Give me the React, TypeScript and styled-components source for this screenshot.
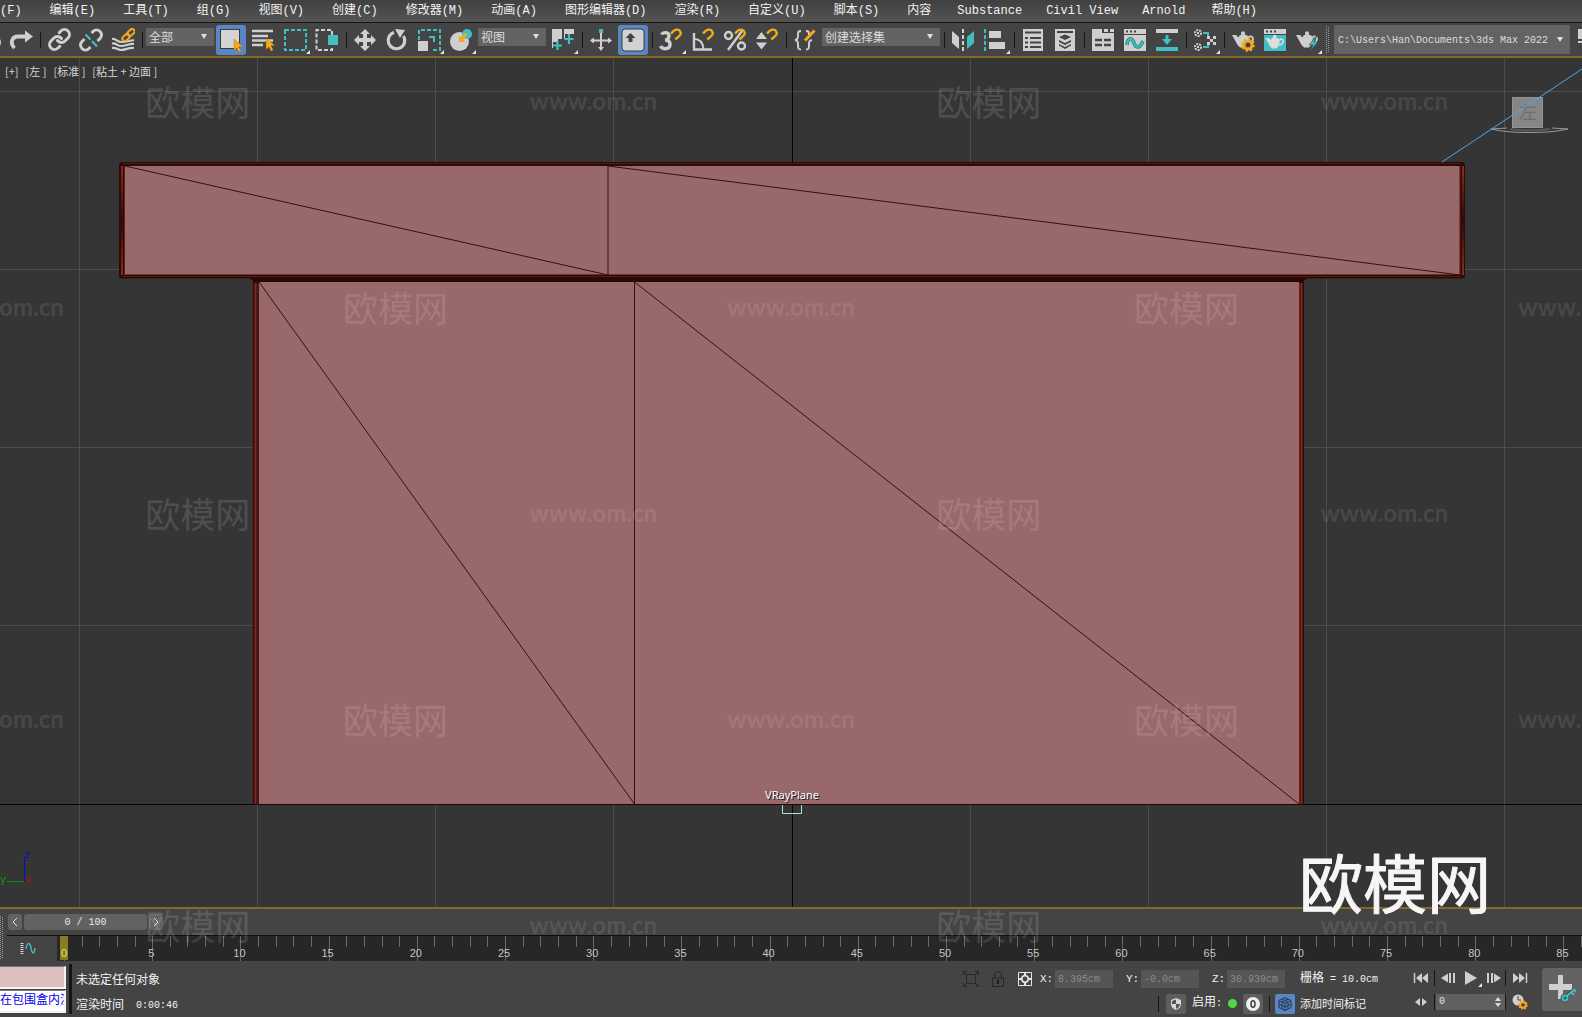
import React from 'react';
import styled, { createGlobalStyle, css } from 'styled-components';

const cjk = `'Noto Sans CJK SC', sans-serif`;
const mono = `'Liberation Mono', 'Noto Sans CJK SC', monospace`;

const c = {
  bar: '#444444',
  view: '#353535',
  gold: '#846a28',
  icon: '#cfcfcf',
  teal: '#41bfc0',
  orange: '#f6a81c',
  active: '#5b86c4',
};

const Global = createGlobalStyle`
  * { box-sizing: border-box; }
  html, body { margin: 0; background: ${c.bar}; }
  body { overflow: hidden; }
  button, input, select { font: inherit; color: inherit; margin: 0; padding: 0; border: 0; border-radius: 0; background: none; outline: 0; }
`;

const Shell = styled.div`
  position: relative;
  display: flex;
  flex-direction: column;
  height: 100vh;
  overflow: hidden;
  background: ${c.bar};
  color: #f2f2f2;
  font-family: ${mono};
  font-size: 12px;
  line-height: 16px;
`;

/* ---------- menu ---------- */

const MenuBar = styled.nav`
  display: flex;
  height: 23px;
  flex: none;
  margin-left: -38px;
  border-bottom: 1px solid #161616;
  background: linear-gradient(#404040, #545454);
`;

const MenuButton = styled.button<{ $latin?: boolean }>`
  flex: none;
  padding: 0 ${(p) => (p.$latin ? 12 : 14)}px 1px;
  line-height: 16px;
  white-space: pre;
`;

/* ---------- toolbar ---------- */

const Toolbar = styled.div`
  display: flex;
  align-items: center;
  flex: none;
  height: 33px;
  margin-left: -27px;
  background: ${c.bar};
`;

const Tool = styled.button<{ $active?: boolean; $flyout?: boolean }>`
  position: relative;
  display: flex;
  align-items: center;
  justify-content: center;
  flex: none;
  width: 30px;
  height: 30px;
  margin: 0 1px;
  border-radius: 3px;
  ${(p) => p.$active && css`background: ${c.active};`}
  ${(p) =>
    p.$flyout &&
    css`
      &::after {
        content: '';
        position: absolute;
        right: 0;
        bottom: 1px;
        border-left: 4px solid transparent;
        border-bottom: 4px solid #e4e4e4;
      }
    `}
`;

const Sep = styled.span`
  flex: none;
  width: 1px;
  height: 16px;
  margin: 0 2px 0 3px;
  background: #151515;
`;

const Drop = styled.div<{ $w?: number; $tall?: boolean }>`
  position: relative;
  ${(p) => (p.$w ? css`flex: none; width: ${p.$w}px;` : css`flex: 1;`)}
  height: ${(p) => (p.$tall ? 29 : 18)}px;
  margin: 0 1px ${(p) => (p.$tall ? 0 : 6)}px;
  background: #636363;
  &::after {
    content: '';
    position: absolute;
    right: 7px;
    top: calc(50% - 3px);
    border: 3px solid transparent;
    border-top: 5px solid #dedede;
    border-bottom: 0;
    pointer-events: none;
  }
  select {
    appearance: none;
    display: block;
    width: 100%;
    height: 100%;
    padding-left: ${(p) => (p.$tall ? 4 : 3)}px;
    padding-top: ${(p) => (p.$tall ? 2 : 0)}px;
    color: #dcdcdc;
    font-family: ${(p) => (p.$tall ? mono : cjk)};
    font-size: ${(p) => (p.$tall ? 10 : 12)}px;
    line-height: 16px;
  }
`;

const ToolGrip = styled.span`
  display: flex;
  justify-content: center;
  flex: none;
  width: 10px;
`;

const CutTool = styled.span`
  flex: none;
  width: 11px;
  height: 30px;
  overflow: hidden;
`;

const Svg = ({ s = 24, w, children }: { s?: number; w?: number; children: React.ReactNode }) => (
  <svg width={w ?? s} height={s} viewBox={`0 0 ${w ?? s} ${s}`} fill="none" aria-hidden="true">
    {children}
  </svg>
);

const Dots = ({ h }: { h: number }) => (
  <Svg s={h} w={4}>
    <path d={`M.5 0V${h}M2.5 1V${h}`} stroke="#9a9a9a" strokeDasharray="1 1" />
  </Svg>
);

const Hook = () => (
  <path d="M12 5.5l3-2.8c2-1.7 4.8-1.2 6 .4 1.2 1.8.6 3.6-.7 4.8L16.3 11.5" stroke={c.orange} strokeWidth="2.4" />
);
const Pot = ({ fill = c.icon }: { fill?: string }) => (
  <g>
    <path d="M1 7h4l2.5 2.5C8 8 9 7 10.5 6.6a2 2 0 1 1 3 0C16 7 17.5 8.5 18 10c0 4-2 8-4 9.5H9C7.5 18 6 16.5 5 14z" fill={fill} />
    <path d="M17.5 9.5c2-2 4.5-1 4.5 1.2 0 2.4-2.5 4.3-5 5" stroke={fill} strokeWidth="1.8" />
  </g>
);
const Cursor = ({ x, y }: { x: number; y: number }) => (
  <path transform={`translate(${x} ${y})`} d="M0 0l9 7.5-4 .3 2.3 4.2L5 13.2 2.8 9 0 11.5z" fill={c.orange} stroke="#7a5414" strokeWidth=".3" />
);

const icons: Record<string, React.ReactNode> = {
  undo: <path d="M20 19c4-4 2-10-4-10H6" stroke={c.icon} strokeWidth="3.6" />,
  redo: (
    <>
      <path d="M5.5 20C.5 15 3 8.5 9 8.5h8" stroke={c.icon} strokeWidth="3.8" />
      <path d="M16 2.5l8 6-8 6z" fill={c.icon} />
    </>
  ),
  link: (
    <g stroke={c.icon} strokeWidth="3" strokeLinecap="round" transform="translate(.5 -.5)">
      <path d="M10 13a5 5 0 0 0 7.54.54l3-3a5 5 0 0 0-7.07-7.07l-1.72 1.71" />
      <path d="M14 11a5 5 0 0 0-7.54-.54l-3 3a5 5 0 0 0 7.07 7.07l1.71-1.71" />
    </g>
  ),
  unlink: (
    <>
      <path d="M12.5 5L14 3.5a4.8 4.8 0 0 1 7 7L18.5 13M11.5 19L10 20.5a4.8 4.8 0 0 1-7-7L5.5 11" stroke={c.icon} strokeWidth="3" />
      <path d="M6.5 6.5l5 5M13 13l5 5.5" stroke={c.teal} strokeWidth="2.2" />
    </>
  ),
  bind: (
    <>
      <path
        d="M1 11c4-1 5 3 9 3 4 0 8-1 13-2M1 15.5c4-1 5 2.5 9 2.5 5 0 8-2.5 13-2M1 20c4-1 5 2 9 2 5 0 8-3 13-2"
        stroke={c.icon}
        strokeWidth="2.2"
      />
      <g stroke={c.orange} strokeWidth="2">
        <rect x="16" y="2" width="8" height="5" rx="2.5" transform="rotate(-42 20 4.5)" />
        <rect x="11" y="7" width="8" height="5" rx="2.5" transform="rotate(-42 15 9.5)" />
      </g>
    </>
  ),
  select: (
    <>
      <rect x="1.5" y="1.5" width="19" height="19" fill="#d4d4d4" stroke="#3c3c3c" />
      <Cursor x={15} y={11} />
    </>
  ),
  byName: (
    <>
      <path d="M1 3h21M1 8h16M1 12.5h21M1 17h11" stroke={c.icon} strokeWidth="2.4" />
      <Cursor x={15} y={10} />
    </>
  ),
  region: <rect x="2" y="2" width="21" height="20" stroke={c.teal} strokeWidth="2" strokeDasharray="4 2" />,
  crossing: (
    <>
      <path d="M17 7V2H1.5v20H17v-3" stroke={c.icon} strokeWidth="2" strokeDasharray="4 2" />
      <rect x="13" y="7" width="10" height="10" fill={c.teal} />
    </>
  ),
  move: <path d="M12 1l5 5h-3v4h4V7l5 5-5 5v-3h-4v4h3l-5 5-5-5h3v-4H6v3l-5-5 5-5v3h4V6H7z" fill={c.icon} />,
  rotate: (
    <>
      <path d="M9 4.5a8.3 8.3 0 1 0 9.5 3.5" stroke={c.icon} strokeWidth="3.2" />
      <path d="M10 1l10 1-5 8z" fill={c.icon} />
    </>
  ),
  scale: (
    <>
      <path d="M2 12V2h21v20h-9" stroke={c.teal} strokeWidth="2" strokeDasharray="4 2" />
      <rect x="1" y="13" width="10" height="10" fill={c.icon} />
      <path d="M12 9h5v5" stroke={c.teal} strokeWidth="2" />
    </>
  ),
  place: (
    <>
      <circle cx="10.5" cy="13.5" r="9.5" fill={c.icon} />
      <circle cx="18" cy="6" r="5" fill={c.teal} />
      <path d="M17.5 6L12 11.5" stroke={c.orange} strokeWidth="3" />
      <path d="M10 7.5V14h6.5z" fill={c.orange} />
    </>
  ),
  pivot: (
    <>
      <path d="M1 1h10v10H7v4H4v5H1zM13 1h10v10h-3V6h-4v5h-3z" fill={c.icon} />
      <path d="M2 14h9v9H2zM14 6h9v10h-9z" fill={c.bar} />
      <path d="M6.5 13v9M2 17.5h9M18 6v10M13.5 11h9" stroke={c.teal} strokeWidth="2.2" />
    </>
  ),
  manipulate: (
    <>
      <path d="M12 5v17M2 12.5h20" stroke={c.icon} strokeWidth="2" />
      <path d="M5 9.5v6l-4-3zM19 9.5v6l4-3zM9 19h6l-3 4z" fill={c.icon} />
      <rect x="10" y="1" width="4" height="4" fill={c.teal} />
    </>
  ),
  keyboard: (
    <>
      <rect x="1" y="1" width="22" height="22" rx="3" fill="#d2d2d2" stroke="#3c3c3c" />
      <path d="M9.5 5l5 5h-3v4h-4v-4h-3z" fill="#444" />
    </>
  ),
  snap3: (
    <>
      <path d="M2.5 6.5C4 3.8 10 3.8 10 8c0 2.5-2 4-4 4 3 0 5 1 5 4.5 0 5-7.5 5.5-9.500 1.500" stroke={c.icon} strokeWidth="3.4" />
      <Hook />
    </>
  ),
  angle: (
    <>
      <path d="M3 5v16.5h18" stroke={c.icon} strokeWidth="2.4" />
      <path d="M3 11c6 0 9 4 9.5 10" stroke={c.icon} strokeWidth="2" />
      <Hook />
    </>
  ),
  percent: (
    <>
      <path d="M19 3L5 22" stroke={c.icon} strokeWidth="2.4" />
      <circle cx="5.5" cy="7.5" r="3.5" stroke={c.icon} strokeWidth="2.4" />
      <circle cx="18.5" cy="18" r="3.5" stroke={c.icon} strokeWidth="2.4" />
      <Hook />
    </>
  ),
  spinner: (
    <>
      <path d="M6.5 4l5.5 7H1zM1 14.5h11l-5.5 7z" fill={c.icon} />
      <Hook />
    </>
  ),
  selSet: (
    <>
      <path d="M8 3C5 3 5 4 5 7s0 4.5-3 5c3 .5 3 2 3 5s0 4.5 3 4.5M13 3c3 0 3 1 3 4M13 21.5c3 0 3-1.5 3-4.5s0-4.5 3-5" stroke={c.icon} strokeWidth="2" />
      <path d="M12 12.5L21.5 2.5" stroke={c.orange} strokeWidth="3" />
    </>
  ),
  mirror: (
    <>
      <path d="M1 3l7 6v12l-7-6z" fill={c.icon} />
      <path d="M23 3l-7 6v12l7-6z" fill={c.teal} />
      <path d="M12 1v22" stroke={c.icon} strokeWidth="2" strokeDasharray="4 2" />
    </>
  ),
  align: (
    <>
      <path d="M2 1v22" stroke={c.teal} strokeWidth="2" strokeDasharray="4 2" />
      <path d="M6 3h12v7H6zM6 14h16v7H6z" fill={c.icon} />
    </>
  ),
  layerList: (
    <>
      <rect x="2" y="1" width="20" height="22" fill={c.icon} />
      <path d="M4 4.5h16M4 10h3M9 10h11M4 14.5h3M9 14.5h11M4 19h3M9 19h11" stroke="#444" strokeWidth="2" />
    </>
  ),
  layers: (
    <>
      <rect x="2" y="1" width="20" height="22" fill={c.icon} />
      <path d="M4 4h16" stroke="#444" strokeWidth="2" />
      <path d="M6 9l6-2.5L18 9l-6 3zM6 12l6 3 6-3v2l-6 3-6-3zM6 16l6 3 6-3v1.5L12 21l-6-3.5z" fill="#444" />
    </>
  ),
  ribbon: (
    <>
      <path d="M1 1h10v4h12v18H1zM13 1h4v3h-4zM19 1h4v3h-4z" fill={c.icon} />
      <path d="M4 12h7M13 12h7M4 17h7M13 17h7" stroke="#444" strokeWidth="2.4" />
    </>
  ),
  curve: (
    <>
      <path d="M1 1h22v5H1zM1 7h22v16H1z" fill={c.icon} />
      <path d="M3 3.5h2M7 3.5h2M11 3.5h2" stroke="#444" strokeWidth="2" />
      <path d="M4 17c1-8 5-8 7-2s6 5 9-2" stroke="#1d7d80" strokeWidth="3.6" />
      <path d="M4 17c1-8 5-8 7-2s6 5 9-2" stroke={c.teal} strokeWidth="2" />
    </>
  ),
  schematic: (
    <>
      <path d="M1 1h22v4H1z" fill={c.icon} />
      <path d="M1 19h22v4H1z" fill={c.teal} />
      <path d="M12 7v5" stroke={c.teal} strokeWidth="3" />
      <path d="M7 11h10l-5 6z" fill={c.teal} />
    </>
  ),
  material: (
    <>
      <path d="M10 5h5v4M10 19h5v-4" stroke={c.teal} strokeWidth="2" />
      <g stroke={c.icon} strokeWidth="2" strokeDasharray="2 1">
        <circle cx="5" cy="5" r="3" />
        <circle cx="5" cy="19" r="3" />
      </g>
      <path d="M14 8h3v3h-3zM20 8h3v3h-3zM17 11h3v3h-3zM14 14h3v3h-3zM20 14h3v3h-3zM4 4h2v2H4zM4 18h2v2H4z" fill={c.icon} />
    </>
  ),
  renderSetup: (
    <>
      <Pot />
      <circle cx="17" cy="17" r="4" stroke={c.orange} strokeWidth="3" fill={c.bar} />
      <circle cx="17" cy="17" r="5.8" stroke={c.orange} strokeWidth="2" strokeDasharray="2.3 2.2" />
    </>
  ),
  frame: (
    <>
      <path d="M1 1h22v5H1z" fill={c.icon} />
      <path d="M3 3.5h2M7 3.5h2M11 3.5h2" stroke="#444" strokeWidth="2" />
      <path d="M1 7h22v16H1z" fill={c.teal} />
      <g transform="translate(1.5 4) scale(.85)">
        <Pot fill="#dedede" />
      </g>
    </>
  ),
  render: (
    <>
      <Pot />
      <path d="M21 8l-7 9h4l-3 6 8-9h-4l3-6z" fill={c.teal} stroke={c.bar} strokeWidth=".6" />
    </>
  ),
};

type ToolDef = { icon?: string; sep?: boolean; drop?: string; w?: number; active?: boolean; flyout?: boolean };
const sep: ToolDef = { sep: true };
const tools: ToolDef[] = [
  { icon: 'undo' },
  { icon: 'redo' },
  sep,
  { icon: 'link' },
  { icon: 'unlink' },
  { icon: 'bind' },
  sep,
  { drop: '全部', w: 68 },
  { icon: 'select', active: true },
  { icon: 'byName' },
  { icon: 'region', flyout: true },
  { icon: 'crossing' },
  sep,
  { icon: 'move' },
  { icon: 'rotate' },
  { icon: 'scale', flyout: true },
  { icon: 'place', flyout: true },
  { drop: '视图', w: 68 },
  { icon: 'pivot', flyout: true },
  sep,
  { icon: 'manipulate' },
  { icon: 'keyboard', active: true },
  sep,
  { icon: 'snap3', flyout: true },
  { icon: 'angle' },
  { icon: 'percent' },
  { icon: 'spinner' },
  sep,
  { icon: 'selSet' },
  { drop: '创建选择集', w: 118 },
  sep,
  { icon: 'mirror' },
  { icon: 'align', flyout: true },
  sep,
  { icon: 'layerList' },
  { icon: 'layers' },
  sep,
  { icon: 'ribbon' },
  { icon: 'curve' },
  { icon: 'schematic' },
  sep,
  { icon: 'material', flyout: true },
  sep,
  { icon: 'renderSetup' },
  { icon: 'frame' },
  { icon: 'render', flyout: true },
];

/* ---------- viewport ---------- */

const Viewport = styled.main`
  position: relative;
  flex: 1;
  min-height: 0;
  border-top: 2px solid ${c.gold};
  border-bottom: 2px solid ${c.gold};
  background: ${c.view};
`;

const Scene = styled.svg`
  display: block;
  width: 100%;
  height: 100%;
`;

const ViewLabels = styled.div`
  position: absolute;
  left: 5px;
  top: 5px;
  display: flex;
  gap: 7px;
  color: #d4d4d4;
  font-family: ${cjk};
  font-size: 11px;
  line-height: 16px;
  button {
    white-space: pre;
  }
`;

const Logo = styled.svg`
  position: absolute;
  right: 87px;
  bottom: -21px;
  z-index: 3;
`;

const verticals = [79.5, 257.5, 435.5, 613.5, 970.5, 1148.5, 1326.5, 1504.5];
const horizontals = [91.5, 269.5, 447.5, 625.5];

const Drawing = () => (
  <Scene viewBox="0 58 1582 849" preserveAspectRatio="xMidYMid slice" role="img" aria-label="左视图">
    <g stroke="#4d4d4d">
      {verticals.map((x) => (
        <path key={x} d={`M${x} 58V907`} />
      ))}
      {horizontals.map((y) => (
        <path key={y} d={`M0 ${y}H1582`} />
      ))}
    </g>
    <path d="M792.5 58V907M0 804.5H1582" stroke="#050505" />

    <path d="M253 281H1304V804H253z" fill="#2c0a06" />
    <path d="M255.5 283V804M1301.5 283V804" stroke="#86261c" strokeWidth="2" />
    <path d="M258 283V804M1299.5 283V804" stroke="#5c2420" />
    <path d="M259 282H1299V804H259z" fill="#99686a" />
    <path d="M250 278H1307L1303 282H254z" fill="#280805" />

    <rect x="119" y="162" width="1346" height="116.5" rx="3" fill="#2c0a06" />
    <path d="M123 163.5H1461M123 276.5H1461" stroke="#571811" />
    <path d="M121 166h2V275h-2zM1462 166h2V275h-2z" fill="url(#edge)" />
    <path d="M124.5 166V275M1460 166V275" stroke="#5c2420" />
    <path d="M125 166H1459.5V274.5H125z" fill="#99686a" />
    <defs>
      <linearGradient id="edge" gradientUnits="userSpaceOnUse" x1="0" y1="166" x2="0" y2="275">
        <stop offset="0" stopColor="#8f2c20" />
        <stop offset=".5" stopColor="#300a06" />
        <stop offset="1" stopColor="#8f2c20" />
      </linearGradient>
    </defs>

    <g stroke="#350f10">
      <path d="M608 166V275M125 166L608 275M608 166L1460 275" />
      <path d="M634.5 282V804M259 282L634.5 804M634.5 282L1299 804" />
      <path d="M254 804.5H1304" stroke="#1d0505" />
    </g>

    <rect x="1512.5" y="97.5" width="30" height="30" fill="#868686" stroke="#949494" />
    <text x="1528" y="119" textAnchor="middle" fontFamily={cjk} fontSize="18" fill="#6b7072">
      左
    </text>
    <path d="M1491 129c14 3 24 3.5 38 3.5s26-.5 39-3.5l-16-1M1491 129l16-1" stroke="#9a9a9a" fill="none" />
    <path d="M1510 129c10 2 28 2 40 0" stroke="#55585c" strokeWidth="2" fill="none" />
    <path d="M1442 162L1582 69" stroke="#45acf2" />

    <text x="793" y="800" textAnchor="middle" fontFamily="'Noto Sans', sans-serif" fontSize="11" fill="#1c1c1c">
      VRayPlane
    </text>
    <text x="792" y="799" textAnchor="middle" fontFamily="'Noto Sans', sans-serif" fontSize="11" fill="#ffffff">
      VRayPlane
    </text>
    <path d="M782.5 805V813.5H801.5V805" stroke="#9fe6e6" fill="none" />

    <path d="M24.5 857V882" stroke="#0b0bc8" />
    <path d="M7 881.5H24" stroke="#0b8a0b" />
    <g fontFamily="'DejaVu Sans', sans-serif" fontSize="10">
      <text x="24" y="858" fill="#0b0bd0">z</text>
      <text x="0" y="883" fill="#0b9a0b">y</text>
      <text x="25" y="883" fill="#a81010">x</text>
    </g>
  </Scene>
);

/* ---------- time line ---------- */

const Timeline = styled.section`
  display: flex;
  flex: none;
  height: 52px;
`;

const GripColumn = styled.div`
  flex: none;
  width: 7px;
  padding-top: 7px;
`;

const TimeColumn = styled.div`
  display: flex;
  flex-direction: column;
  flex: 1;
  min-width: 0;
`;

const SliderRow = styled.div`
  display: flex;
  align-items: center;
  gap: 2px;
  height: 26px;
  padding-left: 1px;
`;

const SliderButton = styled.button<{ $w: number }>`
  display: flex;
  align-items: center;
  justify-content: center;
  width: ${(p) => p.$w}px;
  height: 16px;
  padding-top: ${(p) => (p.$w > 20 ? 2 : 0)}px;
  border-radius: 3px;
  background: #626262;
  color: #e8e8e8;
  font-size: 10px;
  line-height: 14px;
`;

const TrackRow = styled.div`
  display: flex;
  height: 26px;
  border-top: 1px solid #101010;
`;

const CurveButton = styled.button`
  display: flex;
  align-items: center;
  justify-content: center;
  flex: none;
  width: 50px;
  padding: 0 8px 2px 0;
`;

const Track = styled.div`
  display: grid;
  grid-template-columns: repeat(87, calc(100% / 86));
  flex: 1;
  min-width: 0;
  padding-left: 7px;
  overflow: hidden;
  background: #272727;
`;

const Tick = styled.div<{ $major: boolean }>`
  height: ${(p) => (p.$major ? 25 : 11)}px;
  border-left: 1px solid #686868;
`;

const TickLabel = styled.span<{ $current?: boolean }>`
  display: block;
  width: ${(p) => (p.$current ? 8 : 20)}px;
  height: 24px;
  margin-left: ${(p) => (p.$current ? -5 : -12)}px;
  padding-top: 10px;
  color: ${(p) => (p.$current ? '#e6e07a' : '#c4c4c4')};
  background: ${(p) => (p.$current ? '#857e22' : 'none')};
  font-family: 'Liberation Sans', sans-serif;
  font-size: 11px;
  line-height: 14px;
  text-align: center;
`;

/* ---------- status ---------- */

const Status = styled.footer`
  display: flex;
  flex: none;
  height: 56px;
`;

const Listener = styled.div`
  display: flex;
  flex-direction: column;
  gap: 1px;
  flex: none;
  width: 66px;
  padding-top: 5px;
`;

const ListenerLine = styled.input<{ $pink?: boolean }>`
  width: 66px;
  height: 23px;
  padding-bottom: 5px;
  border: solid #f4f4f4;
  border-width: 0 2px 2px 0;
  border-top: 1px solid #777;
  background: ${(p) => (p.$pink ? '#dcc0c0' : '#ffffff')};
  color: #0000ee;
  font-family: ${cjk};
  font-size: 12px;
  line-height: 14px;
`;

const Split = styled.span`
  flex: none;
  width: 3px;
  height: 50px;
  margin: 3px 4px 0 3px;
  border: solid #151515;
  border-width: 0 2px 0 1px;
`;

const Messages = styled.div`
  flex: 1;
  padding-top: 7px;
`;

const Message = styled.p`
  display: flex;
  gap: 12px;
  align-items: center;
  height: 25px;
  margin: 0;
  white-space: nowrap;
`;

const Small = styled.span`
  font-size: 10px;
`;

const Info = styled.div`
  display: flex;
  flex-direction: column;
  align-items: flex-end;
  padding-top: 5px;
`;

const InfoRow = styled.div`
  display: flex;
  align-items: center;
  height: 25px;
`;

const LastCell = styled.div<{ $dense?: boolean }>`
  width: 108px;
  padding-top: 2px;
  font-size: ${(p) => (p.$dense ? 11 : 12)}px;
  white-space: pre;
`;

const PlainButton = styled.button`
  display: flex;
  align-items: center;
  justify-content: center;
  width: 27px;
  height: 22px;
`;

const Coords = styled.div`
  display: flex;
  gap: 13px;
  padding: 0 15px 0 2px;
`;

const Coord = styled.label`
  display: flex;
  align-items: center;
  width: 73px;
  font-size: 11px;
  input {
    width: 58px;
    height: 18px;
    margin-left: auto;
    padding: 2px 0 0 3px;
    background: #555555;
    color: #8b8b8b;
    font-size: 10px;
  }
`;

const Square = styled.button<{ $active?: boolean }>`
  display: flex;
  align-items: center;
  justify-content: center;
  width: 20px;
  height: 20px;
  border-radius: 2px;
  background: ${(p) => (p.$active ? c.active : '#5e5e5e')};
`;

const Enabled = styled.span`
  padding: 0 6px;
`;

const Dot = styled.span`
  width: 9px;
  height: 9px;
  margin-right: 6px;
  border-radius: 50%;
  background: #4fd943;
`;

const Space = styled.span<{ $w: number }>`
  width: ${(p) => p.$w}px;
`;

const Player = styled.div`
  flex: none;
  width: 126px;
  padding-top: 5px;
`;

const PlayerRow = styled.div`
  display: flex;
  align-items: center;
  height: 24px;
`;

const PlayButton = styled(Tool)<{ $w: number }>`
  width: ${(p) => p.$w}px;
  height: 20px;
  margin: 0;
`;

const Bar = styled.span`
  width: 1px;
  height: 16px;
  margin-right: 1px;
  background: #151515;
`;

const Spin = styled.label`
  display: flex;
  align-items: center;
  width: 69px;
  height: 16px;
  padding: 0 3px;
  background: #606060;
  input {
    width: 55px;
    color: #e0e0e0;
    font-size: 10px;
  }
`;

const KeyButton = styled.button`
  display: flex;
  align-items: center;
  flex: none;
  width: 40px;
  height: 43px;
  margin: 7px 0 0 8px;
  padding: 0 0 2px 6px;
  border-radius: 3px 0 0 3px;
  background: #626262;
`;

/* ---------- watermark ---------- */

const Marks = styled.div`
  position: absolute;
  inset: 0;
  z-index: 2;
  overflow: hidden;
  pointer-events: none;
  color: rgba(255, 255, 255, 0.11);
`;

const MarkRow = styled.div<{ $shift?: boolean }>`
  display: grid;
  grid-auto-flow: column;
  grid-auto-columns: 25%;
  align-items: center;
  justify-items: center;
  height: 206px;
  margin-left: ${(p) => (p.$shift ? '-12.5%' : '0')};
  width: 100%;
`;

const MarkName = styled.span`
  padding-bottom: 4px;
  color: rgba(255, 255, 255, 0.1);
  font-family: ${cjk};
  font-size: 35px;
  line-height: 40px;
  text-shadow: 0 0 2px rgba(255, 255, 255, 0.05);
`;

const MarkSite = styled.span`
  padding-bottom: 5px;
  font-family: Lato, sans-serif;
  font-size: 24px;
  font-weight: 700;
  line-height: 40px;
`;

const menus = [
  '文件(F)', '编辑(E)', '工具(T)', '组(G)', '视图(V)', '创建(C)', '修改器(M)', '动画(A)', '图形编辑器(D)',
  '渲染(R)', '自定义(U)', '脚本(S)', '内容', 'Substance', 'Civil View', 'Arnold', '帮助(H)',
];

const coords = [
  ['X:', '8.395cm'],
  ['Y:', '-0.0cm'],
  ['Z:', '30.939cm'],
];

const frames = Array.from({ length: 87 }, (_, i) => i);

export default function App() {
  return (
    <Shell>
      <Global />
      <MenuBar>
        {menus.map((m) => (
          <MenuButton key={m} $latin={/^[A-Z]/.test(m)}>
            {m}
          </MenuButton>
        ))}
      </MenuBar>

      <Toolbar>
        {tools.map((t, i) => {
          if (t.sep) return <Sep key={i} />;
          if (t.drop)
            return (
              <Drop key={i} $w={t.w}>
                <select aria-label={t.drop}>
                  <option>{t.drop}</option>
                </select>
              </Drop>
            );
          return (
            <Tool key={i} $active={t.active} $flyout={t.flyout} aria-label={t.icon}>
              <Svg>{icons[t.icon as string]}</Svg>
            </Tool>
          );
        })}
        <ToolGrip>
          <Dots h={27} />
        </ToolGrip>
        <Drop $tall>
          <select aria-label="项目文件夹">
            <option>C:\Users\Han\Documents\3ds Max 2022</option>
          </select>
        </Drop>
        <CutTool>
          <Svg s={30} w={11}>
            <path d="M7 4h4v10H7zM7 16h4v2H7z" fill={c.icon} />
          </Svg>
        </CutTool>
      </Toolbar>

      <Viewport>
        <Drawing />
        <ViewLabels>
          <button>[+]</button>
          <button>[左 ]</button>
          <button>[标准 ]</button>
          <button>[粘土 + 边面 ]</button>
        </ViewLabels>
        <Logo width="200" height="90" viewBox="0 0 200 90" role="img" aria-label="欧模网">
          <text
            x="100"
            y="70"
            textAnchor="middle"
            fontFamily={cjk}
            fontSize="64"
            fill="#f6f6f6"
            stroke="#f6f6f6"
            strokeWidth="1"
            strokeLinejoin="round"
          >
            欧模网
          </text>
        </Logo>
      </Viewport>

      <Timeline>
        <GripColumn>
          <Dots h={43} />
        </GripColumn>
        <TimeColumn>
          <SliderRow>
            <SliderButton $w={14} aria-label="上一帧">
              <Svg s={10}>
                <path d="M7 1L3 5l4 4" stroke="#e2e2e2" />
              </Svg>
            </SliderButton>
            <SliderButton $w={123}>0 / 100</SliderButton>
            <SliderButton $w={14} aria-label="下一帧">
              <Svg s={10}>
                <path d="M3 1l4 4-4 4" stroke="#e2e2e2" />
              </Svg>
            </SliderButton>
          </SliderRow>
          <TrackRow>
            <CurveButton aria-label="迷你曲线编辑器">
              <Svg s={12} w={16}>
                <path d="M2 1v11" stroke="#d8d8d8" strokeWidth="3" strokeDasharray="1 1" />
                <path d="M6 7c1-7 4-7 5-1s3 7 4 0" stroke={c.teal} strokeWidth="1.5" />
              </Svg>
            </CurveButton>
            <Track>
              {frames.map((f) => (
                <Tick key={f} $major={f % 5 === 0}>
                  {f % 5 === 0 && <TickLabel $current={f === 0}>{f}</TickLabel>}
                </Tick>
              ))}
            </Track>
          </TrackRow>
        </TimeColumn>
      </Timeline>

      <Status>
        <Listener>
          <ListenerLine $pink aria-label="宏录制器" />
          <ListenerLine aria-label="侦听器" defaultValue="在包围盒内渲" />
        </Listener>
        <Split />
        <Messages>
          <Message>未选定任何对象</Message>
          <Message>
            渲染时间 <Small>0:00:46</Small>
          </Message>
        </Messages>

        <Info>
          <InfoRow>
            <PlainButton aria-label="孤立">
              <Svg s={18}>
                <path d="M4.5 4.5h9v9h-9zM1.5 5V1.5H5M13 1.5h3.5V5M16.5 13v3.5H13M5 16.5H1.5V13M2 2l3 3M16 2l-3 3M2 16l3-3M16 16l-3-3" stroke="#282828" />
              </Svg>
            </PlainButton>
            <PlainButton aria-label="锁定">
              <Svg s={18}>
                <path d="M3.5 8h11v8.5h-11zM5.5 8V5a3.5 3.5 0 0 1 7 0v3" stroke="#262626" />
                <path d="M8 10h2v4H8z" fill="#1c1c1c" />
              </Svg>
            </PlainButton>
            <PlainButton aria-label="绝对模式">
              <Svg s={16}>
                <path d="M1.5 1.5h13v13h-13z" stroke="#e4e4e4" />
                <circle cx="8" cy="8" r="3.3" stroke="#e4e4e4" strokeWidth="1.8" />
                <path d="M8 2v3M8 11v3M2 8h3M11 8h3" stroke="#e4e4e4" strokeWidth="2" />
              </Svg>
            </PlainButton>
            <Coords>
              {coords.map(([k, v]) => (
                <Coord key={k}>
                  {k}
                  <input defaultValue={v} />
                </Coord>
              ))}
            </Coords>
            <LastCell>
              栅格<Small>{' = 10.0cm'}</Small>
            </LastCell>
          </InfoRow>
          <InfoRow>
            <Sep />
            <Space $w={5} />
            <Square aria-label="安全">
              <Svg s={14}>
                <path d="M7 1l5 2v4c0 3-2 5-5 6-3-1-5-3-5-6V3z" fill="#d8d8d8" />
                <path d="M7 2.5V7H3V4zM7 7h4c0 2-1.5 4-4 5z" fill="#555" />
              </Svg>
            </Square>
            <Enabled>
              启用<Small>:</Small>
            </Enabled>
            <Dot />
            <Square aria-label="0">
              <Svg s={16}>
                <circle cx="8" cy="8" r="7" fill="#f0f0f0" />
                <ellipse cx="8" cy="8" rx="2" ry="3.2" stroke="#444" strokeWidth="1.6" />
              </Svg>
            </Square>
            <Space $w={3} />
            <Sep />
            <Space $w={3} />
            <Square $active aria-label="时间标记">
              <Svg s={16}>
                <path d="M8 1.5l6 3v7l-6 3-6-3v-7zM2 4.5l6 3 6-3M8 7.5v7M5 3l6 3v7M11 3L5 6v7M2 8l6 3 6-3" stroke="#22344f" />
              </Svg>
            </Square>
            <Space $w={5} />
            <LastCell $dense>添加时间标记</LastCell>
          </InfoRow>
        </Info>

        <Player>
          <PlayerRow>
            <PlayButton $w={26} aria-label="转至开头">
              <Svg s={12} w={16}>
                <path d="M1.5 1v10" stroke={c.icon} strokeWidth="1.5" />
                <path d="M9 1v10L3 6zM15 1v10L9 6z" fill={c.icon} />
              </Svg>
            </PlayButton>
            <Bar />
            <PlayButton $w={23} aria-label="上一帧">
              <Svg s={12} w={14}>
                <path d="M7 1.5v9L0 6z" fill={c.icon} />
                <path d="M9 1v10M13 1v10" stroke={c.icon} strokeWidth="2" />
              </Svg>
            </PlayButton>
            <PlayButton $w={23} $flyout aria-label="播放">
              <Svg s={14}>
                <path d="M1 0v14l12-7z" fill={c.icon} />
              </Svg>
            </PlayButton>
            <PlayButton $w={23} aria-label="下一帧">
              <Svg s={12} w={14}>
                <path d="M7 1.5v9l7-4.5z" fill={c.icon} />
                <path d="M1 1v10M5 1v10" stroke={c.icon} strokeWidth="2" />
              </Svg>
            </PlayButton>
            <Bar />
            <PlayButton $w={26} aria-label="转至结尾">
              <Svg s={12} w={16}>
                <path d="M14.5 1v10" stroke={c.icon} strokeWidth="1.5" />
                <path d="M1 1v10l6-5zM7 1v10l6-5z" fill={c.icon} />
              </Svg>
            </PlayButton>
          </PlayerRow>
          <PlayerRow>
            <PlayButton $w={26} aria-label="关键点模式">
              <Svg s={12}>
                <path d="M5 2v8L0 6zM7 2v8l5-4z" fill={c.icon} />
              </Svg>
            </PlayButton>
            <Bar />
            <Spin>
              <input aria-label="当前帧" defaultValue="0" />
              <Svg s={12} w={8}>
                <path d="M1 5l3-4 3 4zM1 7h6l-3 4z" fill="#dcdcdc" />
              </Svg>
            </Spin>
            <Bar />
            <PlayButton $w={26} aria-label="时间配置">
              <Svg s={16}>
                <circle cx="6" cy="6" r="5.5" fill={c.icon} />
                <path d="M6 2v4h3" stroke="#444" />
                <circle cx="11" cy="11" r="2.8" stroke={c.orange} strokeWidth="2" fill={c.bar} />
                <circle cx="11" cy="11" r="4" stroke={c.orange} strokeWidth="1.5" strokeDasharray="1.6 1.5" />
              </Svg>
            </PlayButton>
          </PlayerRow>
        </Player>
        <KeyButton aria-label="设置关键点">
          <Svg s={30}>
            <path d="M10 1h5v9h9v6h-9v9h-5v-9H1v-6h9z" fill={c.icon} />
            <g stroke="#4c4c4c" strokeWidth="4">
              <circle cx="17" cy="24" r="2.5" />
              <path d="M19 22l8-7" />
            </g>
            <g stroke={c.teal} strokeWidth="2">
              <circle cx="17" cy="24" r="2.5" />
              <path d="M19 22l8-7M23 18l3 3M26 16l2 2" />
            </g>
          </Svg>
        </KeyButton>
      </Status>

      <Marks aria-hidden="true">
        {[0, 1, 2, 3, 4].map((r) => (
          <MarkRow key={r} $shift={r % 2 === 1}>
            {(r % 2 ? [1, 0, 1, 0, 1] : [0, 1, 0, 1]).map((site, i) =>
              site ? <MarkSite key={i}>www.om.cn</MarkSite> : <MarkName key={i}>欧模网</MarkName>
            )}
          </MarkRow>
        ))}
      </Marks>
    </Shell>
  );
}
